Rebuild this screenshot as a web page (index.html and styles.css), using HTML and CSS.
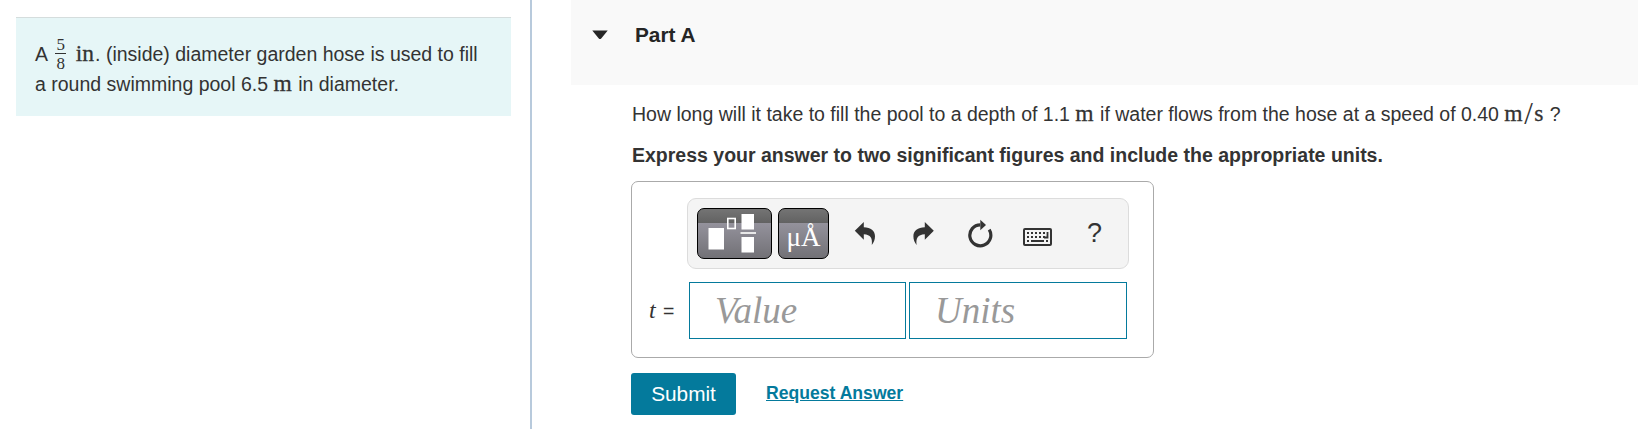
FILE: index.html
```html
<!DOCTYPE html>
<html lang="en">
<head>
  <meta charset="UTF-8" />
  <meta name="viewport" content="width=device-width, initial-scale=1.0" />
  <title>Part A</title>
  <link rel="stylesheet" href="styles.css">
</head>
<body>

  <aside class="sidebar">
    <div class="problem">
      A <span class="fraction"><span class="num">5</span><span class="den">8</span></span> <span class="math">in</span>. (inside) diameter garden hose is used to fill<br>
      a round swimming pool 6.5 <span class="math">m</span> in diameter.
    </div>
  </aside>

  <main class="part">
    <header class="part-header">
      <svg class="caret" width="16" height="10" viewBox="0 0 16 10"><path d="M.3 .5h15.4L9.200 8.400q-1.200 1-2.400 0z" fill="#252525"/></svg>
      <h2>Part A</h2>
    </header>

    <div class="part-body">
      <p class="question">How long will it take to fill the pool to a depth of 1.1 <span class="math">m</span> if water flows from the hose at a speed of 0.40 <span class="math">m<span class="slash">/</span>s</span> ?</p>
      <p class="instructions">Express your answer to two significant figures and include the appropriate units.</p>

      <div class="answer">
        <div class="toolbar">
          <button class="tool templates" aria-label="Templates">
            <svg width="73" height="49" viewBox="0 0 73 49">
              <rect x="10.500" y="19" width="15.500" height="21.500" fill="#fff"/>
              <rect x="29.800" y="9.500" width="7.400" height="10" fill="none" stroke="#fff" stroke-width="1.600"/>
              <rect x="43.500" y="5" width="12.500" height="15.500" fill="#fff"/>
              <rect x="42.500" y="23" width="15.500" height="2" fill="#e8e8e8"/>
              <rect x="43.500" y="28" width="12.500" height="15.500" fill="#fff"/>
            </svg>
          </button>
          <button class="tool symbols">μÅ</button>
          <div class="actions">
            <svg width="22" height="26" viewBox="0 0 22 26"><path d="M.8 9.800 9.800 1.100v5.200C16.800 6.300 21 9.900 21 15.300c0 3.400-1.200 6.200-3.200 8.800.8-6.800-1-10.300-8-10.800v5.500z" fill="#333"/></svg>
            <svg width="22" height="26" viewBox="0 0 22 26"><path d="M21.800 9.800 12.800 1.100v5.200C5.800 6.300 1.400 9.900 1.400 15.300c0 3.400 1.200 6.200 3.200 8.800-.8-6.800 1-10.300 8.200-10.800v5.500z" fill="#333"/></svg>
            <svg width="26" height="30" viewBox="0 0 26 30"><path d="M13.300 5.800A10.500 10.500 0 1 0 22.200 10.700" fill="none" stroke="#333" stroke-width="3.200"/><path d="M13.300 .8 19 6 13.300 11.300z" fill="#333"/></svg>
            <svg width="30" height="20" viewBox="0 0 30 20">
              <rect x="2" y="2" width="27" height="16" rx="1" fill="none" stroke="#333" stroke-width="2"/>
              <path d="M5 6h18M5 10h2M9 10h14M5 14h2M24 14h2" stroke="#333" stroke-width="2" stroke-dasharray="2 2" fill="none"/>
              <path d="M9 14h13M25.500 5v5.500H22" stroke="#333" stroke-width="1.800" fill="none"/>
            </svg>
            <span class="help">?</span>
          </div>
        </div>

        <div class="entry">
          <label><i>t</i> =</label>
          <input type="text" placeholder="Value">
          <input type="text" placeholder="Units">
        </div>
      </div>

      <div class="buttons">
        <button class="submit">Submit</button>
        <a class="request" href="#">Request Answer</a>
      </div>
    </div>
  </main>

</body>
</html>
```

FILE: styles.css
```css
* {
  box-sizing: border-box;
}
body {
  margin: 0;
  height: 429px;
  display: flex;
  overflow: hidden;
  background: #fff;
  color: #333;
  font-family: "Liberation Sans", Arial, sans-serif;
  font-size: 19.5px;
  line-height: 30px;
}
button, input {
  font: inherit;
  margin: 0;
}
.sidebar {
  width: 532px;
  flex: none;
  padding: 17px 19px 0 16px;
  border-right: 2px solid #b8cadc;
}
.problem {
  height: 99px;
  padding: 21px 0 0 19px;
  background: #e6f6f7;
  border-top: 1px solid #d5dddd;
  white-space: nowrap;
}
.math {
  margin-right: 1px;
  font-family: "Liberation Serif", "Times New Roman", serif;
  font-size: 23.5px;
  line-height: 1;
  -webkit-text-stroke: 0.3px #333;
}
.slash {
  margin: 0 1.5px;
  font-size: 31px;
  line-height: 20px;
  vertical-align: -3px;
  -webkit-text-stroke: 0;
}
.fraction {
  display: inline-flex;
  flex-direction: column;
  width: 11px;
  height: 30px;
  margin: 0 4px 0 3px;
  vertical-align: 11px;
  text-align: center;
  font-family: "Liberation Serif", "Times New Roman", serif;
  font-size: 17px;
  line-height: 19px;
}
.num {
  height: 15px;
  border-bottom: 1px solid #333;
  line-height: 11px;
}
.den {
  height: 15px;
}
.part {
  flex: 1;
  margin-left: 39px;
}
.part-header {
  height: 85px;
  padding: 20px 0 0 21px;
  display: flex;
  align-items: flex-start;
  background: #f9f9f9;
  color: #252525;
}
.caret {
  margin: 10px 27px 0 0;
}
h2 {
  margin: 0;
  font-size: 20.8px;
  line-height: 30px;
}
.part-body {
  padding: 14px 0 0 60px;
}
p {
  margin: 0 0 0 1px;
  white-space: nowrap;
}
.question {
  height: 30px;
}
.instructions {
  margin-top: 11px;
  font-weight: bold;
}
.answer {
  width: 523px;
  height: 177px;
  margin-top: 11px;
  padding: 16px 0 0 15px;
  border: 1px solid #aaa;
  border-radius: 7px;
}
.toolbar {
  width: 442px;
  height: 71px;
  margin-left: 40px;
  padding: 9px;
  display: flex;
  gap: 6px;
  background: #f4f4f4;
  border: 1px solid #dcdcdc;
  border-radius: 9px;
}
.tool {
  height: 51px;
  padding: 0;
  border: 1px solid #000;
  border-radius: 7px;
  background: linear-gradient(#747474, #626262 14px, #94929c 14px, #727176);
  color: #fff;
}
.templates {
  width: 75px;
}
.templates svg {
  display: block;
}
.symbols {
  width: 51px;
  padding-top: 6px;
  font-family: "Liberation Serif", "Times New Roman", serif;
  font-size: 27px;
}
.actions {
  display: flex;
  align-items: flex-start;
  padding: 13px 0 0 19px;
}
.actions svg {
  flex: none;
  margin-right: 36px;
}
.actions svg:nth-child(2) {
  margin-right: 33px;
}
.actions svg:nth-child(3) {
  margin: -2px 29px 0 0;
}
.actions svg:nth-child(4) {
  margin: 6px 35px 0 0;
}
.help {
  font-size: 27px;
  line-height: 25px;
}
.entry {
  margin-top: 13px;
  display: flex;
  gap: 3px;
}
.entry label {
  width: 39px;
  padding: 14px 0 0 2px;
  white-space: nowrap;
}
.entry i {
  margin-right: 2px;
  font-family: "Liberation Serif", "Times New Roman", serif;
  font-size: 24px;
  line-height: 1;
}
.entry input {
  width: 217px;
  height: 57px;
  padding: 0 0 1px 25px;
  border: 1px solid #047a9c;
  font: italic 37px "Liberation Serif", "Times New Roman", serif;
}
.entry input + input {
  width: 218px;
}
.entry input::placeholder {
  color: #999;
}
.buttons {
  margin-top: 15px;
  display: flex;
}
.submit {
  width: 105px;
  height: 42px;
  padding: 0;
  border: 0;
  border-radius: 3px;
  background: #047a9c;
  color: #fff;
  font-size: 20.8px;
}
.request {
  margin: 5px 0 0 30px;
  color: #047a9c;
  font-size: 17.6px;
  font-weight: bold;
}
```
